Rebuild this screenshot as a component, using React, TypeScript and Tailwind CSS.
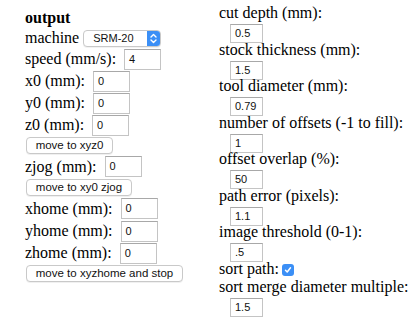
import React from "react";

const serif = { fontFamily: '"Liberation Serif", "Times New Roman", serif' };

function LInput({ value }: { value: string }) {
  return (
    <div className="w-[37px] h-[21px] border border-[#c4c4c4] border-t-[#a8a8a8] bg-white flex items-center pl-[4px] text-[11px] text-[#111] font-['Liberation_Sans',Arial,sans-serif] leading-none shrink-0">
      {value}
    </div>
  );
}

function RInput({ value }: { value: string }) {
  return (
    <div className="w-[33px] h-[19px] border border-[#c4c4c4] border-t-[#a8a8a8] bg-white flex items-center pl-[4px] text-[11px] text-[#111] font-['Liberation_Sans',Arial,sans-serif] leading-none shrink-0">
      {value}
    </div>
  );
}

function Btn({ label, w }: { label: string; w: string }) {
  return (
    <div
      className={`${w} h-[17px] ml-[1px] rounded-[4px] border border-[#c9c9c9] bg-white shadow-[0_1px_0_rgba(0,0,0,0.06)] flex items-center justify-center text-[11.5px] text-[#111] font-['Liberation_Sans',Arial,sans-serif] leading-none whitespace-nowrap`}
    >
      {label}
    </div>
  );
}

function LRow({ label, value, h = "h-[22px]" }: { label: string; value: string; h?: string }) {
  return (
    <div className={`${h} flex items-center gap-[8px]`}>
      <span className="leading-[18px]">{label}</span>
      <LInput value={value} />
    </div>
  );
}

function RGroup({ label, value }: { label: string; value: string }) {
  return (
    <div className="flex flex-col">
      <div className="h-[17px] leading-[17px] whitespace-nowrap">{label}</div>
      <div className="h-[19.5px] pl-[11px] pt-[3px]">
        <RInput value={value} />
      </div>
    </div>
  );
}

export default function App() {
  return (
    <div className="w-[415px] h-[321px] bg-white text-black text-[16px] relative overflow-hidden" style={serif}>
      <div className="flex">
        <div className="w-[194px] pl-[25px] pt-[8px] flex flex-col">
          <div className="h-[19px] leading-[19px] font-bold">output</div>
          <div className="h-[21px] flex items-center gap-[4px]">
            <span className="leading-[18px]">machine</span>
            <div className="w-[78px] h-[17px] mt-[1px] rounded-[4px] border border-[#c9c9c9] bg-white flex items-stretch overflow-hidden shadow-[0_1px_0_rgba(0,0,0,0.05)]">
              <div className="flex-1 flex items-center pl-[9px] text-[11px] text-[#111] font-['Liberation_Sans',Arial,sans-serif] leading-none">
                SRM-20
              </div>
              <div className="w-[13px] bg-[#3b8ff6] flex items-center justify-center">
                <svg width="7" height="11" viewBox="0 0 7 11" fill="none" stroke="white" strokeWidth="1.4" strokeLinecap="round" strokeLinejoin="round">
                  <path d="M1 4 L3.5 1.5 L6 4" />
                  <path d="M1 7 L3.5 9.5 L6 7" />
                </svg>
              </div>
            </div>
          </div>
          <LRow label="speed (mm/s):" value="4" />
          <LRow label="x0 (mm):" value="0" />
          <LRow label="y0 (mm):" value="0" />
          <LRow label="z0 (mm):" value="0" />
          <div className="h-[19px] flex items-center">
            <Btn label="move to xyz0" w="w-[87px]" />
          </div>
          <LRow label="zjog (mm):" value="0" h="h-[23px]" />
          <div className="h-[19px] flex items-center">
            <Btn label="move to xy0 zjog" w="w-[106px]" />
          </div>
          <LRow label="xhome (mm):" value="0" h="h-[23px]" />
          <LRow label="yhome (mm):" value="0" />
          <LRow label="zhome (mm):" value="0" />
          <div className="h-[19px] flex items-center">
            <Btn label="move to xyzhome and stop" w="w-[157px]" />
          </div>
        </div>
        <div className="pl-[25px] pt-[4px] flex flex-col">
          <RGroup label="cut depth (mm):" value="0.5" />
          <RGroup label="stock thickness (mm):" value="1.5" />
          <RGroup label="tool diameter (mm):" value="0.79" />
          <RGroup label="number of offsets (-1 to fill):" value="1" />
          <RGroup label="offset overlap (%):" value="50" />
          <RGroup label="path error (pixels):" value="1.1" />
          <RGroup label="image threshold (0-1):" value=".5" />
          <div className="h-[18.5px] flex items-center gap-[3px]">
            <span className="leading-[17px]">sort path:</span>
            <div className="w-[12px] h-[12px] rounded-[3px] bg-[#3b8ff6] flex items-center justify-center mt-[2px]">
              <svg width="8" height="8" viewBox="0 0 8 8" fill="none" stroke="white" strokeWidth="1.5" strokeLinecap="round" strokeLinejoin="round">
                <path d="M1.5 4.2 L3.2 6 L6.5 1.8" />
              </svg>
            </div>
          </div>
          <RGroup label="sort merge diameter multiple:" value="1.5" />
        </div>
      </div>
    </div>
  );
}
